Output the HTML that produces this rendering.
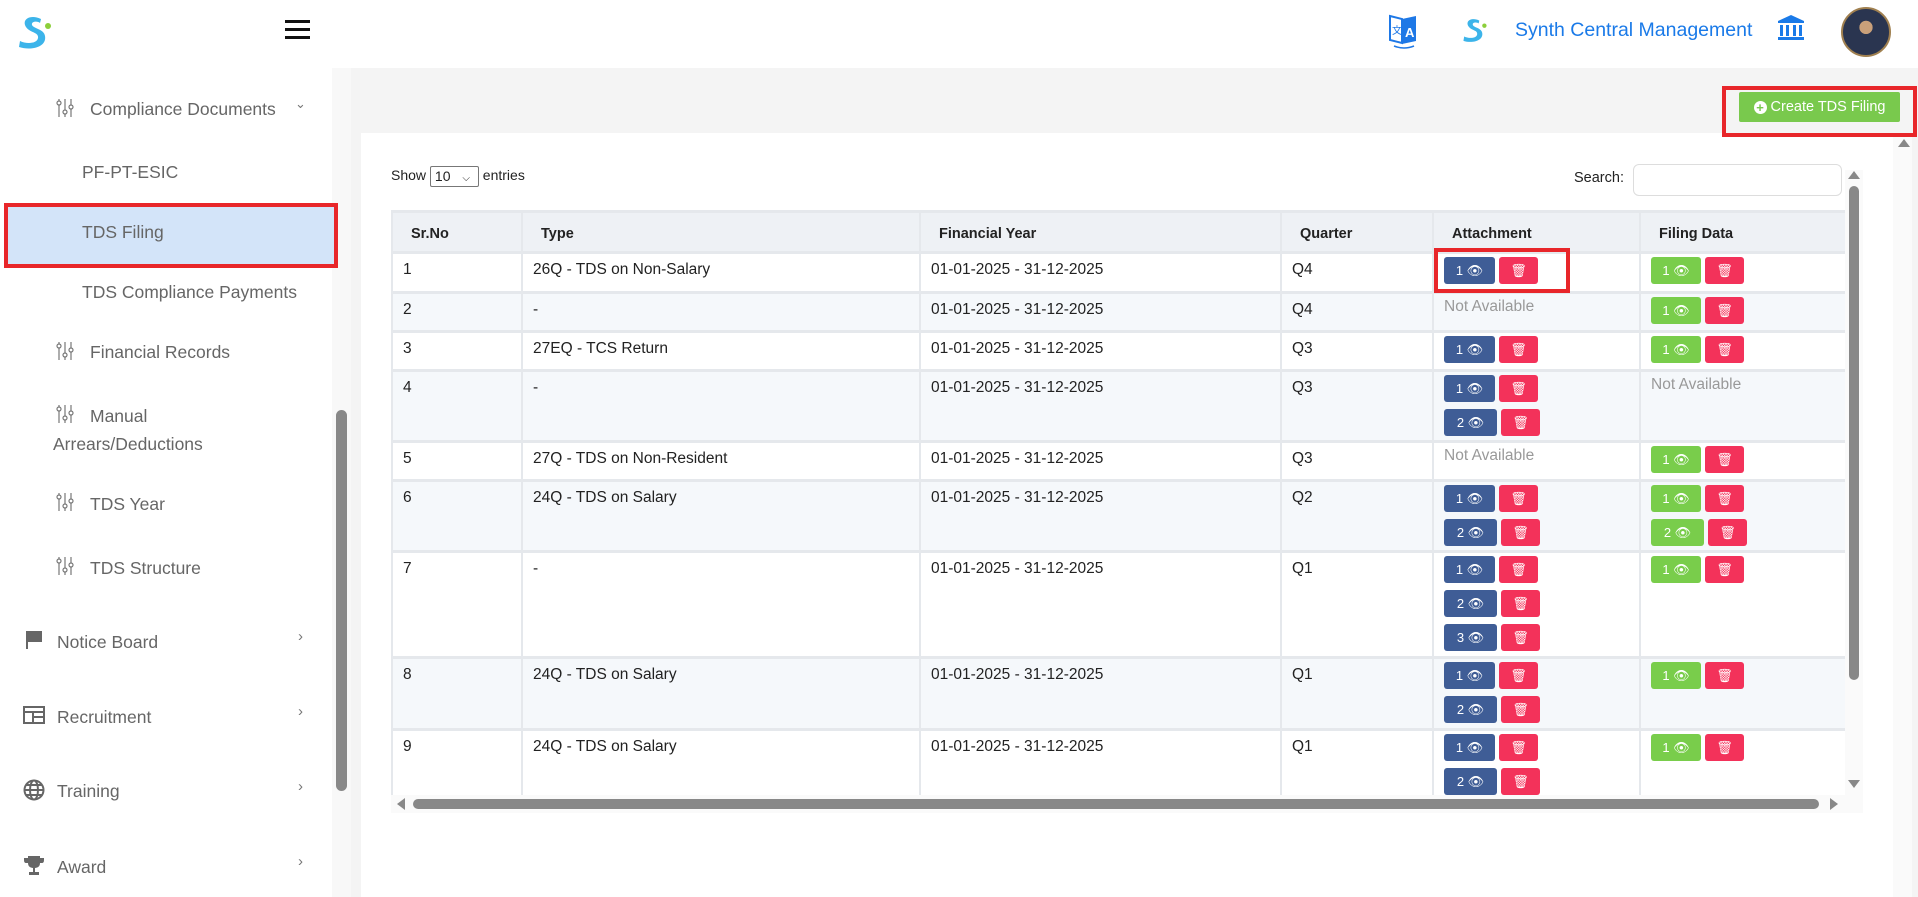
<!DOCTYPE html>
<html><head><meta charset="utf-8"><style>
*{box-sizing:border-box;margin:0;padding:0}
body{width:1918px;height:897px;overflow:hidden;background:#fff;font-family:"Liberation Sans",Arial,sans-serif;position:relative}
.abs{position:absolute}
.side{left:0;top:68px;width:332px;height:829px;background:#fff}
.si{position:absolute;color:#666;font-size:17.5px;white-space:nowrap}
.chev{position:absolute;left:298px;color:#777;font-size:15px}
.main{left:351px;top:68px;width:1567px;height:829px;background:#f4f4f4}
.card{left:361px;top:133px;width:1533px;height:764px;background:#fff}
table{position:absolute;left:391px;top:210px;border-collapse:collapse;font-size:15.5px;color:#222;table-layout:fixed}
td,th{border:2px solid #e5e8ec;border-top:3px solid #e5e8ec;vertical-align:top;text-align:left;padding:7px 10px 0 10px;line-height:18px}
th{background:#eef1f5;font-weight:bold;font-size:14.5px;padding:12px 18px 0;height:41px;color:#222}
tr:nth-child(odd) td{background:#f5f8fb}
tr:nth-child(even) td{background:#fff}
td.b{padding:3px 0 0 10px}
.ln{height:27px;white-space:nowrap}
.ln+.ln{margin-top:7px}
.bt{display:inline-block;height:27px;border-radius:3px;color:#fff;font-size:13px;line-height:27px;text-align:center;vertical-align:top}
.bl{background:#3f5d96;width:51px}.gr{background:#79cd4b;width:50px}.rd{background:#f3325a;width:39px;margin-left:4px}
.na{color:#999;display:block;margin-top:-3px}
</style></head><body>
<!-- header -->
<svg class="abs" style="left:17px;top:15px" width="36" height="34" viewBox="0 0 36 34"><path d="M24 4 C14 -1 4 4 9 12 C13 18 22 17 21 23 C20 29 9 29 3 26 L2 32 C14 36 30 32 28 21 C27 14 17 14 15 10 C14 6 21 6 23 8 Z" fill="#3cb4ea"/><circle cx="31" cy="11" r="3" fill="#8ccf3a"/></svg>
<div class="abs" style="left:285px;top:20px;width:25px;height:3px;background:#111;box-shadow:0 8px 0 #111,0 16px 0 #111"></div>
<svg class="abs" style="left:1388px;top:13px" width="32" height="36" viewBox="0 0 32 36"><path d="M2 3 L14 6 L14 30 L2 27 Z" fill="#fff" stroke="#1e78e6" stroke-width="2"/><path d="M14 6 L28 3 L28 28 L14 31 Z" fill="#1e78e6"/><text x="17" y="24" font-size="13" fill="#fff" font-weight="bold" font-family="Liberation Sans">A</text><text x="4" y="21" font-size="10" fill="#1e78e6" font-family="Noto Sans CJK JP">文</text><path d="M6 33 Q16 37 26 33" stroke="#1e78e6" fill="none" stroke-width="1.5"/></svg>
<svg class="abs" style="left:1462px;top:16px" width="26" height="28" viewBox="0 0 36 34"><path d="M24 4 C14 -1 4 4 9 12 C13 18 22 17 21 23 C20 29 9 29 3 26 L2 32 C14 36 30 32 28 21 C27 14 17 14 15 10 C14 6 21 6 23 8 Z" fill="#3cb4ea"/><circle cx="31" cy="11" r="3" fill="#8ccf3a"/></svg>
<div class="abs" style="left:1515px;top:19px;font-size:19.5px;color:#1a7ae8">Synth Central Management</div>
<svg class="abs" style="left:1777px;top:14px" width="28" height="28" viewBox="0 0 28 28" fill="#1a7ae8"><path d="M14 1 L27 7 L27 9 L1 9 L1 7 Z"/><rect x="3" y="11" width="3" height="11"/><rect x="9" y="11" width="3" height="11"/><rect x="16" y="11" width="3" height="11"/><rect x="22" y="11" width="3" height="11"/><rect x="1" y="23" width="26" height="3"/></svg>
<div class="abs" style="left:1841px;top:7px;width:50px;height:50px;border-radius:50%;background:radial-gradient(circle at 50% 40%,#c9a07a 0 18%,#2a3550 19% 100%);border:2px solid #a08050"></div>
<!-- sidebar -->
<div class="abs side"></div>
<div class="abs" style="left:332px;top:68px;width:19px;height:829px;background:#f8f8f8"></div>
<div class="abs" style="left:336px;top:410px;width:11px;height:381px;border-radius:6px;background:#888"></div>
<svg class="abs" style="left:56px;top:98px" width="18" height="20" viewBox="0 0 18 20" stroke="#777" fill="none" stroke-width="1.2"><path d="M3 1V19M9 1V19M15 1V19"/><circle cx="3" cy="5" r="2" fill="#fff"/><circle cx="9" cy="14" r="2" fill="#fff"/><circle cx="15" cy="9" r="2" fill="#fff"/></svg>
<div class="si" style="left:90px;top:99px">Compliance Documents</div>
<div class="abs" style="left:295px;top:96px;color:#777;font-size:13px">&#8964;</div>
<div class="si" style="left:82px;top:162px">PF-PT-ESIC</div>
<div class="abs" style="left:4px;top:203px;width:334px;height:65px;border:4px solid #e8262a;background:#d3e4f9"></div>
<div class="si" style="left:82px;top:222px">TDS Filing</div>
<div class="si" style="left:82px;top:282px">TDS Compliance Payments</div>
<svg class="abs" style="left:56px;top:341px" width="18" height="20" viewBox="0 0 18 20" stroke="#777" fill="none" stroke-width="1.2"><path d="M3 1V19M9 1V19M15 1V19"/><circle cx="3" cy="5" r="2" fill="#fff"/><circle cx="9" cy="14" r="2" fill="#fff"/><circle cx="15" cy="9" r="2" fill="#fff"/></svg>
<div class="si" style="left:90px;top:342px">Financial Records</div>
<svg class="abs" style="left:56px;top:404px" width="18" height="20" viewBox="0 0 18 20" stroke="#777" fill="none" stroke-width="1.2"><path d="M3 1V19M9 1V19M15 1V19"/><circle cx="3" cy="5" r="2" fill="#fff"/><circle cx="9" cy="14" r="2" fill="#fff"/><circle cx="15" cy="9" r="2" fill="#fff"/></svg>
<div class="si" style="left:90px;top:406px">Manual</div>
<div class="si" style="left:53px;top:434px">Arrears/Deductions</div>
<svg class="abs" style="left:56px;top:492px" width="18" height="20" viewBox="0 0 18 20" stroke="#777" fill="none" stroke-width="1.2"><path d="M3 1V19M9 1V19M15 1V19"/><circle cx="3" cy="5" r="2" fill="#fff"/><circle cx="9" cy="14" r="2" fill="#fff"/><circle cx="15" cy="9" r="2" fill="#fff"/></svg>
<div class="si" style="left:90px;top:494px">TDS Year</div>
<svg class="abs" style="left:56px;top:556px" width="18" height="20" viewBox="0 0 18 20" stroke="#777" fill="none" stroke-width="1.2"><path d="M3 1V19M9 1V19M15 1V19"/><circle cx="3" cy="5" r="2" fill="#fff"/><circle cx="9" cy="14" r="2" fill="#fff"/><circle cx="15" cy="9" r="2" fill="#fff"/></svg>
<div class="si" style="left:90px;top:558px">TDS Structure</div>
<svg class="abs" style="left:25px;top:630px" width="20" height="20" viewBox="0 0 20 20" fill="#666"><rect x="1" y="1" width="2" height="18"/><path d="M3 1H17V12H3Z"/></svg>
<div class="si" style="left:57px;top:632px">Notice Board</div><div class="chev" style="top:628px">&#8250;</div>
<svg class="abs" style="left:23px;top:705px" width="22" height="20" viewBox="0 0 22 20" fill="none" stroke="#666" stroke-width="2"><rect x="1" y="2" width="20" height="16"/><path d="M1 7H21M10 7V18M10 12H21"/></svg>
<div class="si" style="left:57px;top:707px">Recruitment</div><div class="chev" style="top:703px">&#8250;</div>
<svg class="abs" style="left:23px;top:779px" width="22" height="22" viewBox="0 0 22 22" fill="none" stroke="#666" stroke-width="2"><circle cx="11" cy="11" r="9.5"/><ellipse cx="11" cy="11" rx="4" ry="9.5"/><path d="M1.5 11H20.5M3 6H19M3 16H19"/></svg>
<div class="si" style="left:57px;top:781px">Training</div><div class="chev" style="top:778px">&#8250;</div>
<svg class="abs" style="left:23px;top:855px" width="22" height="20" viewBox="0 0 22 20" fill="#666"><path d="M5 1H17V8C17 12 14 13 11 13C8 13 5 12 5 8Z"/><path d="M1 3H5V8H3Q1 8 1 5ZM21 3H17V8H19Q21 8 21 5Z"/><rect x="10" y="13" width="2" height="4"/><rect x="6" y="17" width="10" height="3"/></svg>
<div class="si" style="left:57px;top:857px">Award</div><div class="chev" style="top:853px">&#8250;</div>
<!-- main -->
<div class="abs main"></div>
<div class="abs card"></div>
<div class="abs" style="left:1893px;top:133px;width:19px;height:764px;background:#fafafa"></div>
<div class="abs" style="left:1898px;top:139px;width:0;height:0;border-left:6px solid transparent;border-right:6px solid transparent;border-bottom:8px solid #888"></div>
<div class="abs" style="left:1722px;top:86px;width:195px;height:51px;border:4px solid #e8262a"></div>
<div class="abs" style="left:1739px;top:92px;width:161px;height:30px;background:#79c94d;border-radius:2px;color:#fff;font-size:14.5px;line-height:30px;text-align:center"><span style="display:inline-block;width:13px;height:13px;border-radius:50%;background:#fff;color:#79c94d;font-size:13px;line-height:13px;font-weight:bold;vertical-align:-1px">+</span> Create TDS Filing</div>
<div class="abs" style="left:391px;top:166px;font-size:14px;color:#222">Show <span style="display:inline-block;width:49px;height:21px;border:1px solid #777;border-radius:2px;vertical-align:middle;font-size:14px;line-height:19px;padding-left:4px">10 <span style="font-size:10px;margin-left:8px">&#9013;</span></span> entries</div>
<div class="abs" style="left:1574px;top:170px;font-size:14.5px;color:#222">Search:</div>
<div class="abs" style="left:1633px;top:164px;width:209px;height:32px;border:1px solid #ddd;border-radius:6px"></div>
<table>
<colgroup><col style="width:130px"><col style="width:398px"><col style="width:361px"><col style="width:152px"><col style="width:207px"><col style="width:206px"></colgroup>
<tr><th>Sr.No</th><th>Type</th><th>Financial Year</th><th>Quarter</th><th>Attachment</th><th>Filing Data</th></tr>
<tr style="height:40px"><td>1</td><td>26Q - TDS on Non-Salary</td><td>01-01-2025 - 31-12-2025</td><td>Q4</td><td class="b"><div class="ln"><span class="bt bl">1 &#128065;</span><span class="bt rd">&#128465;</span></div></td><td class="b"><div class="ln"><span class="bt gr">1 &#128065;</span><span class="bt rd">&#128465;</span></div></td></tr>
<tr style="height:39px"><td>2</td><td>-</td><td>01-01-2025 - 31-12-2025</td><td>Q4</td><td><span class="na">Not Available</span></td><td class="b"><div class="ln"><span class="bt gr">1 &#128065;</span><span class="bt rd">&#128465;</span></div></td></tr>
<tr style="height:39px"><td>3</td><td>27EQ - TCS Return</td><td>01-01-2025 - 31-12-2025</td><td>Q3</td><td class="b"><div class="ln"><span class="bt bl">1 &#128065;</span><span class="bt rd">&#128465;</span></div></td><td class="b"><div class="ln"><span class="bt gr">1 &#128065;</span><span class="bt rd">&#128465;</span></div></td></tr>
<tr style="height:71px"><td>4</td><td>-</td><td>01-01-2025 - 31-12-2025</td><td>Q3</td><td class="b"><div class="ln"><span class="bt bl">1 &#128065;</span><span class="bt rd">&#128465;</span></div><div class="ln"><span class="bt bl" style="width:53px">2 &#128065;</span><span class="bt rd">&#128465;</span></div></td><td><span class="na">Not Available</span></td></tr>
<tr style="height:39px"><td>5</td><td>27Q - TDS on Non-Resident</td><td>01-01-2025 - 31-12-2025</td><td>Q3</td><td><span class="na">Not Available</span></td><td class="b"><div class="ln"><span class="bt gr">1 &#128065;</span><span class="bt rd">&#128465;</span></div></td></tr>
<tr style="height:71px"><td>6</td><td>24Q - TDS on Salary</td><td>01-01-2025 - 31-12-2025</td><td>Q2</td><td class="b"><div class="ln"><span class="bt bl">1 &#128065;</span><span class="bt rd">&#128465;</span></div><div class="ln"><span class="bt bl" style="width:53px">2 &#128065;</span><span class="bt rd">&#128465;</span></div></td><td class="b"><div class="ln"><span class="bt gr">1 &#128065;</span><span class="bt rd">&#128465;</span></div><div class="ln"><span class="bt gr" style="width:53px">2 &#128065;</span><span class="bt rd">&#128465;</span></div></td></tr>
<tr style="height:106px"><td>7</td><td>-</td><td>01-01-2025 - 31-12-2025</td><td>Q1</td><td class="b"><div class="ln"><span class="bt bl">1 &#128065;</span><span class="bt rd">&#128465;</span></div><div class="ln"><span class="bt bl" style="width:53px">2 &#128065;</span><span class="bt rd">&#128465;</span></div><div class="ln"><span class="bt bl" style="width:53px">3 &#128065;</span><span class="bt rd">&#128465;</span></div></td><td class="b"><div class="ln"><span class="bt gr">1 &#128065;</span><span class="bt rd">&#128465;</span></div></td></tr>
<tr style="height:72px"><td>8</td><td>24Q - TDS on Salary</td><td>01-01-2025 - 31-12-2025</td><td>Q1</td><td class="b"><div class="ln"><span class="bt bl">1 &#128065;</span><span class="bt rd">&#128465;</span></div><div class="ln"><span class="bt bl" style="width:53px">2 &#128065;</span><span class="bt rd">&#128465;</span></div></td><td class="b"><div class="ln"><span class="bt gr">1 &#128065;</span><span class="bt rd">&#128465;</span></div></td></tr>
<tr style="height:72px"><td>9</td><td>24Q - TDS on Salary</td><td>01-01-2025 - 31-12-2025</td><td>Q1</td><td class="b"><div class="ln"><span class="bt bl">1 &#128065;</span><span class="bt rd">&#128465;</span></div><div class="ln"><span class="bt bl" style="width:53px">2 &#128065;</span><span class="bt rd">&#128465;</span></div></td><td class="b"><div class="ln"><span class="bt gr">1 &#128065;</span><span class="bt rd">&#128465;</span></div></td></tr>
</table>
<div class="abs" style="left:385px;top:795px;width:1480px;height:102px;background:#fff"></div>
<div class="abs" style="left:1434px;top:248px;width:136px;height:45px;border:4px solid #e8262a"></div>
<!-- inner scrollbars -->
<div class="abs" style="left:1845px;top:170px;width:18px;height:625px;background:#fafafa"></div>
<div class="abs" style="left:1848px;top:171px;width:0;height:0;border-left:6px solid transparent;border-right:6px solid transparent;border-bottom:8px solid #888"></div>
<div class="abs" style="left:1849px;top:186px;width:10px;height:494px;border-radius:5px;background:#888"></div>
<div class="abs" style="left:1848px;top:780px;width:0;height:0;border-left:6px solid transparent;border-right:6px solid transparent;border-top:8px solid #888"></div>
<div class="abs" style="left:391px;top:795px;width:1472px;height:18px;background:#fafafa"></div>
<div class="abs" style="left:397px;top:798px;width:0;height:0;border-top:6px solid transparent;border-bottom:6px solid transparent;border-right:8px solid #888"></div>
<div class="abs" style="left:413px;top:799px;width:1406px;height:10px;border-radius:5px;background:#888"></div>
<div class="abs" style="left:1830px;top:798px;width:0;height:0;border-top:6px solid transparent;border-bottom:6px solid transparent;border-left:8px solid #888"></div>
</body></html>
